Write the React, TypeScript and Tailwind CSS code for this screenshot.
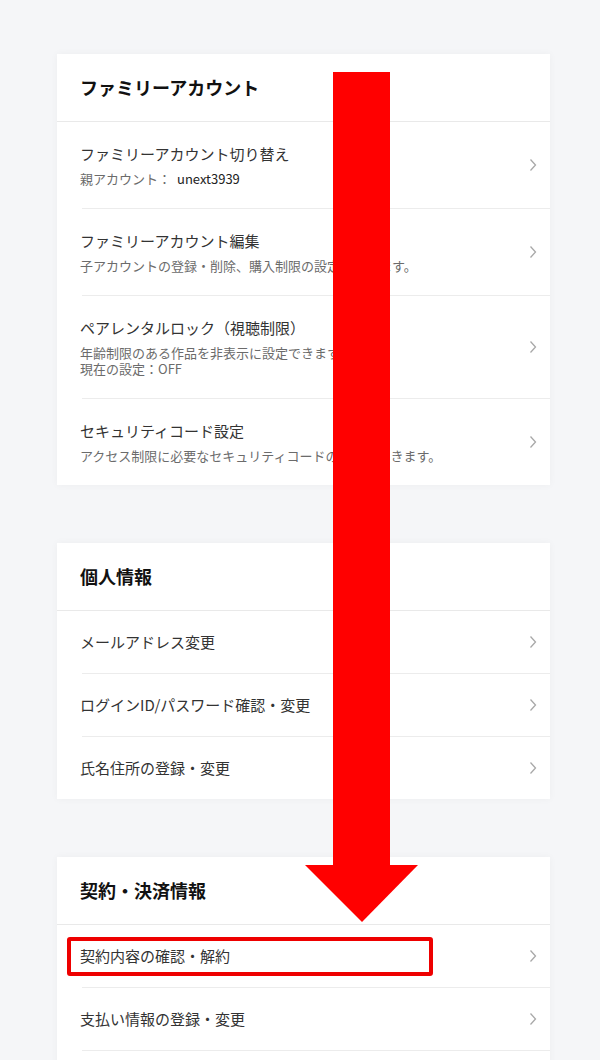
import React from "react";

type Item = { title: string; sub?: React.ReactNode[] };

const Chevron = () => (
  <svg width="8" height="14" viewBox="0 0 8 14" className="shrink-0">
    <polyline points="1.5,1.5 6.5,7 1.5,12.5" fill="none" stroke="#a8a8a8" strokeWidth="1.3" />
  </svg>
);

const Card = ({ title, items }: { title: string; items: Item[] }) => (
  <div className="bg-white shadow-[0_0_8px_rgba(0,0,0,0.04)]">
    <div className="h-[68px] pl-[23px] flex items-center border-b border-[#e9e9e9] pb-[2px]">
      <h2 className="text-[18px] leading-[26px] font-bold text-[#111]">{title}</h2>
    </div>
    {items.map((it, i) => (
      <div key={i} className={i > 0 ? "ml-[25px] border-t border-[#ececec]" : ""}>
        <div
          className={`flex items-center pr-[13px] ${i > 0 ? "" : "pl-[25px]"} ${
            it.sub ? "pt-[21px] pb-[21px]" : "py-[20px]"
          }`}
        >
          <div className="flex-1 -ml-[2px]">
            <div className="text-[15px] leading-[22px] text-[#333]">{it.title}</div>
            {it.sub && (
              <div className="mt-[6px] text-[13px] leading-[16px] text-[#6b6b6b]">
                {it.sub.map((s, j) => (
                  <div key={j}>{s}</div>
                ))}
              </div>
            )}
          </div>
          <Chevron />
        </div>
      </div>
    ))}
  </div>
);

export default function App() {
  return (
    <div
      className="relative w-[600px] h-[1060px] overflow-hidden bg-[#f5f6f8] pt-[54px] pl-[57px] pr-[50px]"
      style={{ fontFamily: '"Noto Sans CJK JP", "Noto Sans", sans-serif' }}
    >
      <div className="flex flex-col gap-[58px]">
        <Card
          title="ファミリーアカウント"
          items={[
            {
              title: "ファミリーアカウント切り替え",
              sub: [
                <span key="a">
                  親アカウント：<span className="ml-[6px] text-[#222]">unext3939</span>
                </span>,
              ],
            },
            {
              title: "ファミリーアカウント編集",
              sub: ["子アカウントの登録・削除、購入制限の設定ができます。"],
            },
            {
              title: "ペアレンタルロック（視聴制限）",
              sub: ["年齢制限のある作品を非表示に設定できます。", "現在の設定：OFF"],
            },
            {
              title: "セキュリティコード設定",
              sub: ["アクセス制限に必要なセキュリティコードの設定ができます。"],
            },
          ]}
        />
        <Card
          title="個人情報"
          items={[
            { title: "メールアドレス変更" },
            { title: "ログインID/パスワード確認・変更" },
            { title: "氏名住所の登録・変更" },
          ]}
        />
        <Card
          title="契約・決済情報"
          items={[
            { title: "契約内容の確認・解約" },
            { title: "支払い情報の登録・変更" },
            { title: "ポイント・クーポン" },
          ]}
        />
      </div>

      <svg
        className="absolute left-0 top-0 pointer-events-none"
        width="600"
        height="1060"
        viewBox="0 0 600 1060"
      >
        <rect x="333" y="72" width="57" height="794" fill="#ff0000" />
        <polygon points="305,865 418,865 362,922" fill="#ff0000" />
      </svg>

      <div className="absolute left-[67px] top-[937px] w-[366px] h-[39px] border-[4px] border-[#ee0000] rounded-[3px] pointer-events-none" />
    </div>
  );
}
